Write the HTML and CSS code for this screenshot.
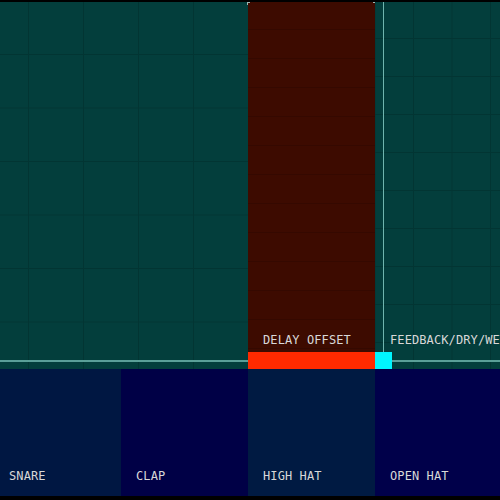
FILE: index.html
```html
<!DOCTYPE html>
<html>
<head>
<meta charset="utf-8">
<link rel="stylesheet" href="styles.css">
</head>
<body>
<div class="app">
  <div class="top">
    <div class="panel panel-a">
      <div class="panel-body"></div>
      <div class="panel-foot"><div class="hline"></div></div>
    </div>
    <div class="panel panel-b">
      <span class="tick tick-l"></span>
      <span class="tick tick-r"></span>
      <div class="panel-body"><span class="label">DELAY OFFSET</span></div>
      <div class="panel-foot"><div class="redbar"></div></div>
    </div>
    <div class="panel panel-c">
      <div class="panel-body"><div class="vline"></div><span class="label">FEEDBACK/DRY/WET</span></div>
      <div class="panel-foot foot-c"><div class="cyan"></div><div class="hline"></div></div>
    </div>
  </div>
  <div class="pads">
    <div class="pad pad-1"><span class="label">SNARE</span></div>
    <div class="pad pad-2"><span class="label">CLAP</span></div>
    <div class="pad pad-3"><span class="label">HIGH HAT</span></div>
    <div class="pad pad-4"><span class="label">OPEN HAT</span></div>
  </div>
</div>
</body>
</html>
```

FILE: styles.css
```css
* { box-sizing: border-box; }
html, body { margin: 0; padding: 0; background: #000; }
body { width: 500px; height: 500px; overflow: hidden; font-family: "DejaVu Sans Mono", monospace; }
.app { padding-top: 2px; display: flex; flex-direction: column; height: 496px; }
.top { display: flex; height: 367px; }
.panel { display: flex; flex-direction: column; position: relative; }
.panel-body { flex: 1; display: flex; align-items: flex-end; position: relative; }
.panel-foot { height: 17px; display: flex; align-items: center; }
.label { color: #d8d8d8; font-size: 12px; line-height: 12px; white-space: nowrap; letter-spacing: 0.1px; }

.panel-a {
  width: 248px;
  background-color: #033e3c;
  background-image:
    linear-gradient(to right, #023533 1px, transparent 1px),
    linear-gradient(to bottom, #023533 1px, transparent 1px);
  background-size: 55px 100%, 100% 53.5px;
  background-position: 28px 0, 0 52px;
}
.hline { height: 2px; flex: 1; background: #5a9f98; margin-top: 1px; }

.panel-b {
  width: 127px;
  background-color: #3d0b00;
  background-image: linear-gradient(to bottom, #350900 1px, transparent 1px);
  background-size: 100% 29px;
  background-position: 0 27px;
}
.panel-b .panel-body { padding: 0 0 6px 15px; }
.redbar { height: 17px; width: 100%; background: #ff2a00; }
.tick { position: absolute; top: 0; width: 3px; height: 3px; border-top: 1px solid #9fb8b4; }
.tick-l { left: -1px; border-left: 1px solid #9fb8b4; }
.tick-r { right: -1px; border-right: 1px solid #9fb8b4; }

.panel-c {
  flex: 1;
  overflow: hidden;
  background-color: #033e3c;
  background-image:
    linear-gradient(to right, #023533 1px, transparent 1px),
    linear-gradient(to bottom, #023533 1px, transparent 1px);
  background-size: 38.5px 100%, 100% 38px;
  background-position: 38px 0, 0 36px;
}
.panel-c .panel-body { padding: 0 0 6px 15px; }
.vline { position: absolute; left: 8px; top: 0; bottom: 0; width: 1px; background: #6fb5ae; }
.foot-c { position: relative; }
.cyan { width: 17px; height: 17px; background: #00f6ff; }

.pads { display: flex; height: 127px; }
.pad { display: flex; align-items: flex-end; padding: 0 0 14px 9px; }
.pad-1 { width: 121px; background: #001742; }
.pad-2 { width: 127px; background: #000046; padding-left: 15px; }
.pad-3 { width: 127px; background: #001a42; padding-left: 15px; }
.pad-4 { flex: 1; background: #00004a; padding-left: 15px; }
```
